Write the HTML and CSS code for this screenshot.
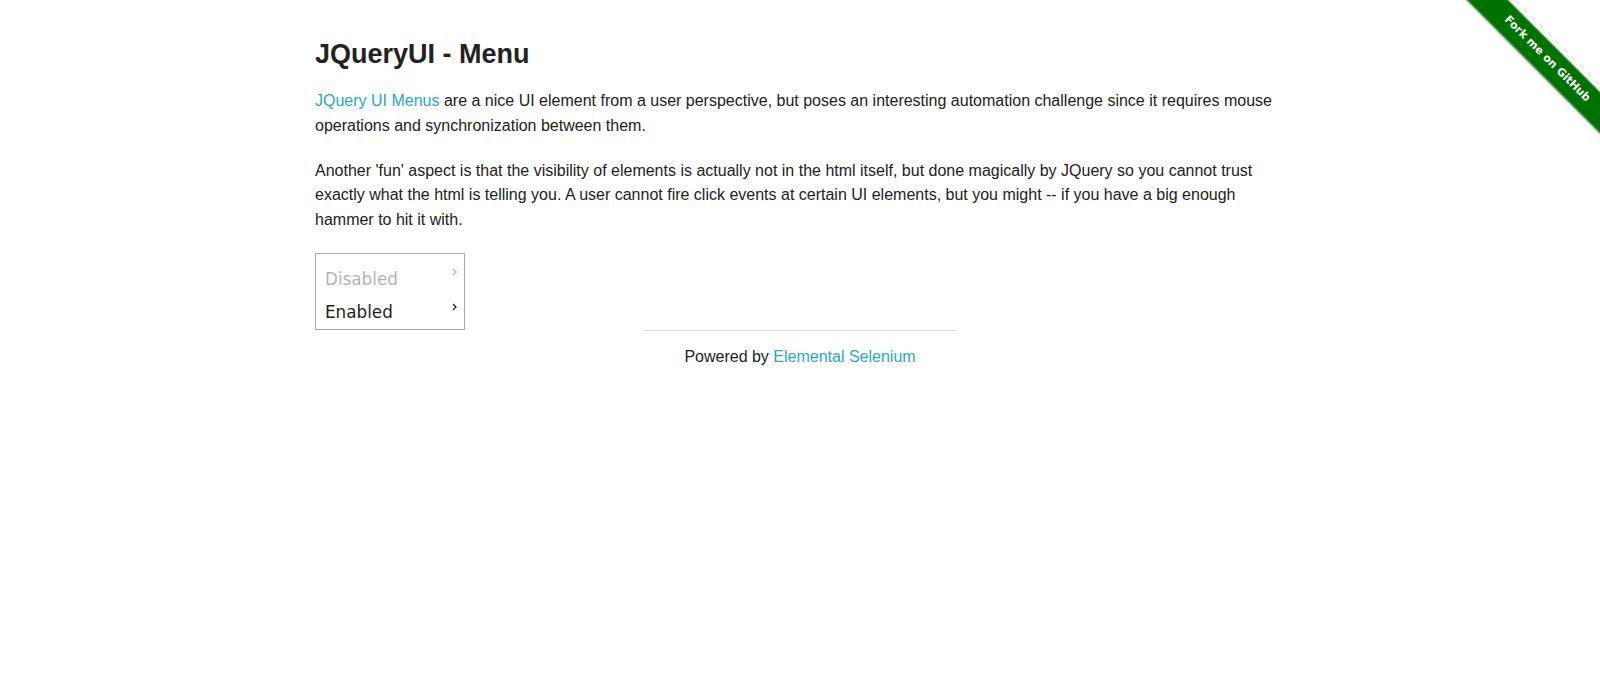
FILE: index.html
```html
<!DOCTYPE html>
<html lang="en">
<head>
<meta charset="utf-8">
<title>The Internet</title>
<link rel="stylesheet" href="styles.css">
</head>
<body>
<a class="ribbon-wrap" href="#"><span class="ribbon">Fork me on GitHub</span></a>
<div class="row">
  <div class="content">
    <h3 class="title">JQueryUI - Menu</h3>
    <p><a href="#" class="link">JQuery UI Menus</a> are a nice UI element from a user perspective, but poses an interesting automation challenge since it requires mouse operations and synchronization between them.</p>
    <p>Another 'fun' aspect is that the visibility of elements is actually not in the html itself, but done magically by JQuery so you cannot trust exactly what the html is telling you. A user cannot fire click events at certain UI elements, but you might -- if you have a big enough hammer to hit it with.</p>
    <ul class="menu">
      <li class="menu-item disabled">
        <span>Disabled</span>
        <svg class="caret" width="5" height="8" viewBox="0 0 5 8"><path d="M1 1 L4 4 L1 7" fill="none" stroke="currentColor" stroke-width="1.3"/></svg>
      </li>
      <li class="menu-item">
        <span>Enabled</span>
        <svg class="caret" width="5" height="8" viewBox="0 0 5 8"><path d="M1 1 L4 4 L1 7" fill="none" stroke="currentColor" stroke-width="1.3"/></svg>
      </li>
    </ul>
  </div>
</div>
<div class="footer">
  <hr class="rule">
  <div class="powered">Powered by <a href="#" class="link">Elemental Selenium</a></div>
</div>
</body>
</html>
```

FILE: styles.css
```css
html, body {
  margin: 0;
  padding: 0;
  background: #fff;
}
body {
  font-family: "Liberation Sans", Arial, sans-serif;
  font-size: 16px;
  color: #222;
  line-height: 24.5px;
}
.row {
  width: 1000px;
  margin: 0 auto;
}
.content {
  padding: 38px 15px 0;
}
.title {
  margin: 0 0 18.6px;
  font-size: 27px;
  line-height: 32.4px;
  font-weight: bold;
  color: #222;
}
p {
  margin: 0 0 20.5px;
}
.link {
  color: #2ba6cb;
  text-decoration: none;
}
.menu {
  list-style: none;
  margin: 2.5px 0 0 0;
  padding: 9px 0 0;
  width: 148px;
  border: 1px solid #aaa;
  font-family: "DejaVu Sans", Verdana, sans-serif;
  font-size: 16.8px;
}
.menu-item {
  position: relative;
  height: 25px;
  line-height: 25px;
  padding: 4px 0 4px 9px;
  color: #222;
}
.menu-item.disabled {
  color: #b3b3b3;
}
.caret {
  position: absolute;
  right: 7px;
  top: 7px;
  display: block;
}
.menu-item.disabled .caret {
  top: 5px;
}
.footer {
  width: 314px;
  margin: 0 auto;
}
.rule {
  margin: 0 0 14px;
  border: 0;
  border-top: 1px solid #ddd;
  height: 0;
}
.powered {
  text-align: center;
}
.ribbon-wrap {
  position: absolute;
  top: 0;
  right: 0;
  width: 149px;
  height: 149px;
  overflow: hidden;
  text-decoration: none;
}
.ribbon {
  position: absolute;
  left: -7.5px;
  top: 42px;
  width: 200px;
  height: 29px;
  box-sizing: border-box;
  background: #007200;
  color: #fff;
  font-family: "DejaVu Sans", "Liberation Sans", sans-serif;
  font-size: 11px;
  font-weight: bold;
  line-height: 25px;
  text-align: center;
  text-indent: 8px;
  transform: rotate(45deg);
  border-top: 1px solid #3d9a3d;
  border-bottom: 1px solid #3d9a3d;
  box-shadow: 0 1px 2px rgba(0,0,0,0.35);
}
```
